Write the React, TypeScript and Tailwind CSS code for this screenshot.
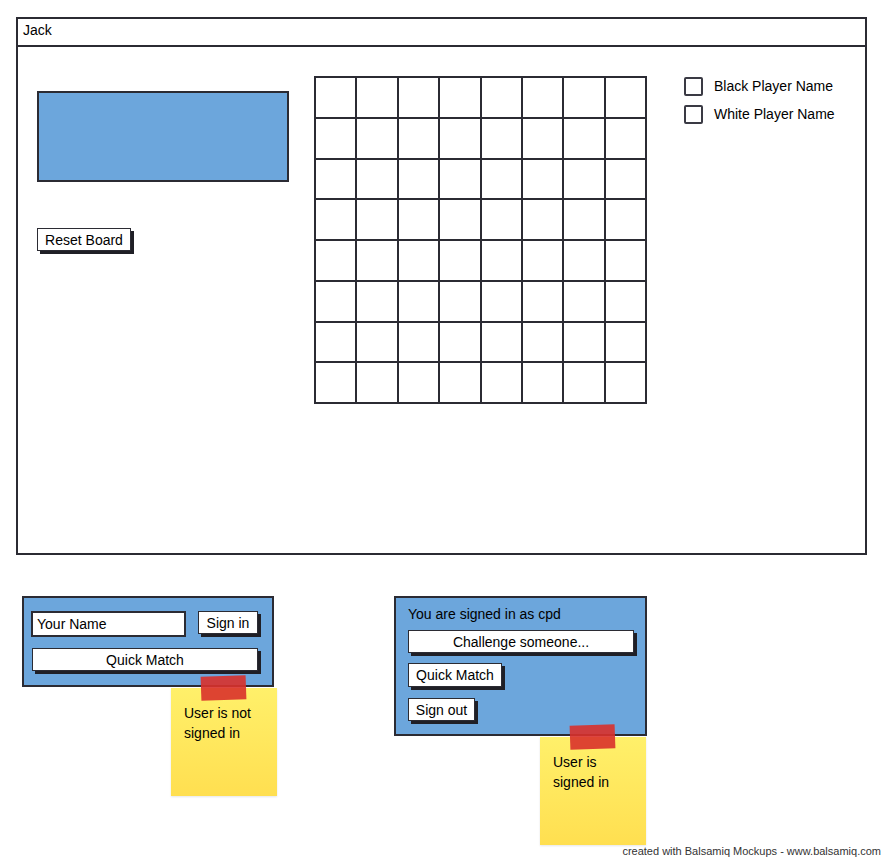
import React from "react";

const ink = "border-[#2b2b33]";

function SketchButton({ label, className = "" }: { label: string; className?: string }) {
  return (
    <div
      className={`bg-white border-[1.5px] ${ink} shadow-[3px_3px_0_#1f1f26] flex items-center justify-center text-[14px] text-black leading-none ${className}`}
    >
      {label}
    </div>
  );
}

function StickyNote({ lines, className = "" }: { lines: string[]; className?: string }) {
  return (
    <div className={`absolute w-[106px] ${className}`}>
      {/* tape */}
      <div className="absolute left-[30px] -top-[12px] w-[45px] h-[24px] bg-[#d9312b]/90 -rotate-2 z-10" />
      <div className="h-[108px] bg-gradient-to-b from-[#fff06a] to-[#ffdf50] pt-[15px] pl-[13px] text-[14px] leading-[20px] text-black shadow-[0_1px_2px_rgba(0,0,0,0.1)]">
        {lines.map((l) => (
          <div key={l}>{l}</div>
        ))}
      </div>
    </div>
  );
}

export default function App() {
  return (
    <div className="w-[884px] h-[861px] bg-white flex flex-col font-['Liberation_Sans',Arial,sans-serif] text-black">
      {/* Main window */}
      <div className={`ml-[16px] mt-[17px] w-[851px] h-[538px] border-2 ${ink} flex flex-col`}>
        <div className={`h-[28px] border-b-2 ${ink} px-[5px] pt-[1px] text-[14px] leading-[20px]`}>Jack</div>
        <div className="flex">
          {/* left column */}
          <div className="pl-[19px] pt-[44px] flex flex-col">
            <div className={`w-[252px] h-[91px] bg-[#6ca6dc] border-2 ${ink}`} />
            <SketchButton label="Reset Board" className="mt-[46px] w-[94px] h-[23px]" />
          </div>

          {/* board */}
          <div className="ml-[25px] mt-[29px]">
            <div className={`grid grid-cols-8 w-[333px] h-[328px] border-l-2 border-t-2 ${ink}`}>
              {Array.from({ length: 64 }).map((_, i) => (
                <div key={i} className={`border-r-2 border-b-2 ${ink}`} />
              ))}
            </div>
          </div>

          {/* players */}
          <div className="ml-[37px] mt-[30px] flex flex-col gap-[9px]">
            {["Black Player Name", "White Player Name"].map((n) => (
              <div key={n} className="flex items-center gap-[11px] text-[14px] leading-[19px]">
                <div className="w-[19px] h-[19px] border-2 border-[#3a3a44] rounded-[2px]" />
                <span>{n}</span>
              </div>
            ))}
          </div>
        </div>
      </div>

      {/* Bottom state panels */}
      <div className="flex mt-[41px] pl-[22px] gap-[120px] items-start">
        <div className="relative">
          <div className={`w-[252px] h-[91px] bg-[#6ca6dc] border-2 ${ink} pl-[7px] pt-[13px]`}>
            <div className="flex gap-[12px]">
              <div className={`w-[155px] h-[26px] bg-white border-2 ${ink} flex items-center pl-[4px] text-[14px]`}>
                Your Name
              </div>
              <SketchButton label="Sign in" className="w-[60px] h-[23px]" />
            </div>
            <SketchButton label="Quick Match" className="mt-[11px] ml-[1px] w-[226px] h-[23px]" />
          </div>
          <StickyNote lines={["User is not", "signed in"]} className="left-[149px] top-[92px]" />
        </div>

        <div className="relative">
          <div className={`w-[253px] h-[140px] bg-[#6ca6dc] border-2 ${ink} pl-[12px] pt-[7px]`}>
            <div className="text-[14px] leading-[18px]">You are signed in as cpd</div>
            <SketchButton label="Challenge someone..." className="mt-[7px] w-[226px] h-[23px]" />
            <SketchButton label="Quick Match" className="mt-[10px] w-[94px] h-[24px]" />
            <SketchButton label="Sign out" className="mt-[11px] w-[67px] h-[23px]" />
          </div>
          <StickyNote lines={["User is", "signed in"]} className="left-[146px] top-[141px]" />
        </div>
      </div>

      <div className="mt-auto mb-[3px] text-right pr-[3px] text-[11px] leading-[14px] text-[#333]">
        created with Balsamiq Mockups - www.balsamiq.com
      </div>
    </div>
  );
}
